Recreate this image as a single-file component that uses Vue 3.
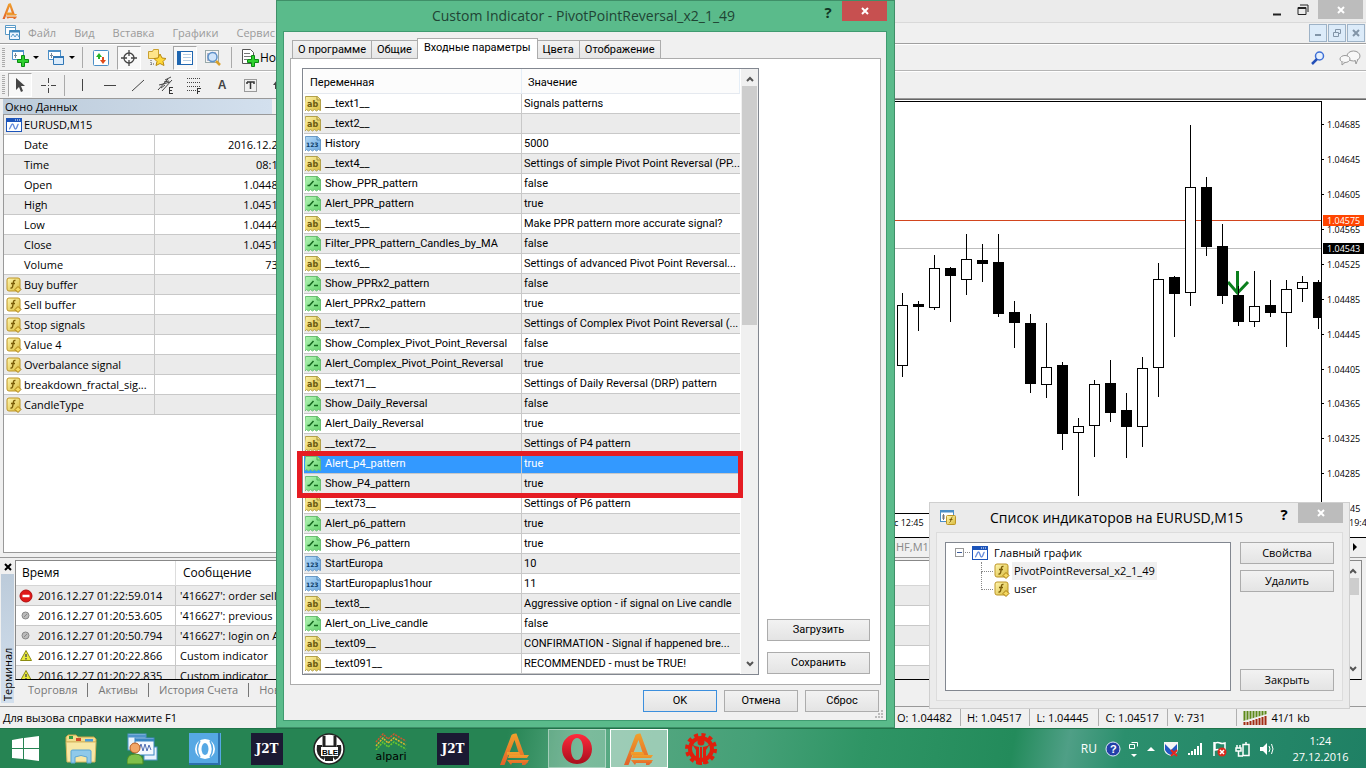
<script setup>
const fmt = (type, name, value) => ({ type, name, value })
const params = [
  fmt('ab', '__text1__', 'Signals patterns'),
  fmt('ab', '__text2__', ''),
  fmt('num', 'History', '5000'),
  fmt('ab', '__text4__', 'Settings of simple Pivot Point Reversal (PP...'),
  fmt('bool', 'Show_PPR_pattern', 'false'),
  fmt('bool', 'Alert_PPR_pattern', 'true'),
  fmt('ab', '__text5__', 'Make PPR pattern more accurate signal?'),
  fmt('bool', 'Filter_PPR_pattern_Candles_by_MA', 'false'),
  fmt('ab', '__text6__', 'Settings of advanced Pivot Point Reversal...'),
  fmt('bool', 'Show_PPRx2_pattern', 'false'),
  fmt('bool', 'Alert_PPRx2_pattern', 'true'),
  fmt('ab', '__text7__', 'Settings of Complex Pivot Point Reversal (...'),
  fmt('bool', 'Show_Complex_Pivot_Point_Reversal', 'false'),
  fmt('bool', 'Alert_Complex_Pivot_Point_Reversal', 'true'),
  fmt('ab', '__text71__', 'Settings of Daily Reversal (DRP) pattern'),
  fmt('bool', 'Show_Daily_Reversal', 'false'),
  fmt('bool', 'Alert_Daily_Reversal', 'true'),
  fmt('ab', '__text72__', 'Settings of P4 pattern'),
  fmt('bool', 'Alert_p4_pattern', 'true'),
  fmt('bool', 'Show_P4_pattern', 'true'),
  fmt('ab', '__text73__', 'Settings of P6 pattern'),
  fmt('bool', 'Alert_p6_pattern', 'true'),
  fmt('bool', 'Show_P6_pattern', 'true'),
  fmt('num', 'StartEuropa', '10'),
  fmt('num', 'StartEuropaplus1hour', '11'),
  fmt('ab', '__text8__', 'Aggressive option - if signal on Live candle'),
  fmt('bool', 'Alert_on_Live_candle', 'false'),
  fmt('ab', '__text09__', 'CONFIRMATION - Signal if happened bre...'),
  fmt('ab', '__text091__', 'RECOMMENDED - must be TRUE!'),
]
const selected = 'Alert_p4_pattern'

const dataRows = [
  ['Date', '2016.12.27'], ['Time', '08:15'], ['Open', '1.04482'], ['High', '1.04517'],
  ['Low', '1.04445'], ['Close', '1.04517'], ['Volume', '731'],
]
const buffers = ['Buy buffer', 'Sell buffer', 'Stop signals', 'Value 4', 'Overbalance signal', 'breakdown_fractal_sig...', 'CandleType']

const log = [
  ['stop', '2016.12.27 01:22:59.014', "'416627': order sell"],
  ['dot', '2016.12.27 01:20:53.605', "'416627': previous"],
  ['dot', '2016.12.27 01:20:50.794', "'416627': login on A"],
  ['warn', '2016.12.27 01:20:22.866', 'Custom indicator'],
  ['warn', '2016.12.27 01:20:22.835', 'Custom indicator'],
]

// x centre, high, body top, body bottom, low, 1 = bearish
const candles = [
  [902, 293, 305, 366, 377, 0], [918, 301, 304, 307, 331, 1], [934, 255, 268, 308, 310, 0],
  [950, 267, 268, 276, 322, 1], [966, 234, 259, 280, 295, 0], [982, 244, 260, 264, 282, 1],
  [998, 234, 262, 314, 317, 1], [1014, 301, 312, 323, 348, 1], [1030, 314, 323, 384, 393, 1],
  [1046, 323, 367, 385, 398, 0], [1062, 362, 365, 434, 450, 1], [1078, 418, 426, 433, 496, 0],
  [1094, 380, 384, 426, 457, 0], [1110, 360, 383, 413, 422, 1], [1126, 393, 410, 427, 458, 1],
  [1142, 357, 368, 427, 447, 0], [1158, 263, 279, 368, 397, 0], [1174, 276, 277, 294, 337, 1],
  [1190, 125, 187, 293, 306, 0], [1206, 177, 187, 247, 256, 1], [1222, 224, 246, 296, 304, 1],
  [1238, 286, 295, 322, 326, 1], [1254, 271, 306, 322, 327, 0], [1270, 280, 305, 313, 317, 1],
  [1286, 280, 289, 313, 347, 0], [1302, 276, 282, 289, 302, 0], [1318, 280, 282, 318, 329, 1],
]
const prices = [
  ['1.04685', 125], ['1.04645', 160], ['1.04605', 195], ['1.04565', 230], ['1.04525', 265], ['1.04485', 300],
  ['1.04445', 335], ['1.04405', 370], ['1.04365', 404], ['1.04325', 439], ['1.04285', 474],
]
const tabs = ['О программе', 'Общие', 'Входные параметры', 'Цвета', 'Отображение']
const status = ['O: 1.04482', 'H: 1.04517', 'L: 1.04445', 'C: 1.04517', 'V: 731']
</script>

<template>
  <div class="desktop">
    <svg class="defs" aria-hidden="true">
      <defs>
        <linearGradient id="gy" x2="1" y2="1"><stop offset="0" stop-color="#fff6b0" /><stop offset="1" stop-color="#d9bb3c" /></linearGradient>
        <linearGradient id="gg" x2="1" y2="1"><stop offset="0" stop-color="#b9f5bb" /><stop offset="1" stop-color="#63d56c" /></linearGradient>
        <linearGradient id="gb" x2="1" y2="1"><stop offset="0" stop-color="#b8dcf8" /><stop offset="1" stop-color="#6ba9e0" /></linearGradient>
        <linearGradient id="go" x2="0" y2="1"><stop offset="0" stop-color="#f0a12c" /><stop offset="1" stop-color="#e2622a" /></linearGradient>
        <linearGradient id="gr" x2="0" y2="1"><stop offset="0" stop-color="#ff2a3c" /><stop offset="1" stop-color="#a80f1c" /></linearGradient>
      </defs>
      <symbol id="i-ab" viewBox="0 0 16 16">
        <path d="M.5.5h12l3 3v11l-2-1-2 1.500-2-1.500-2 1.500-2-1.500-2 1.500-2-1.500-1.500 1.500-1.500-1z" fill="url(#gy)" stroke="#b3a14b" />
        <path d="M12 .5v3.500h3.500" fill="#efe08a" stroke="#a5903a" />
      </symbol>
      <symbol id="i-num" viewBox="0 0 16 16">
        <path d="M.5.5h12l3 3v11l-2-1-2 1.500-2-1.500-2 1.500-2-1.500-2 1.500-2-1.500-1.500 1.500-1.500-1z" fill="url(#gb)" stroke="#6a9ac6" />
        <path d="M12 .5v3.500h3.500" fill="#a3cdf0" stroke="#4d86bb" />
      </symbol>
      <symbol id="i-bool" viewBox="0 0 16 16">
        <path d="M.5.5h12l3 3v11l-2-1-2 1.500-2-1.500-2 1.500-2-1.500-2 1.500-2-1.500-1.500 1.500-1.500-1z" fill="url(#gg)" stroke="#6cc074" />
        <path d="M12 .5v3.500h3.500" fill="#8fe396" stroke="#4db058" />
        <path d="M2.500 9.500h2l4-4.500M9 9.500h4" fill="none" stroke="#14691f" stroke-width="1.500" />
      </symbol>
      <symbol id="i-fx" viewBox="0 0 16 16">
        <rect x="1" y="1" width="13" height="13" rx="2" fill="url(#gy)" stroke="#bd9526" />
        <path d="M9.500 3.500c-2-.5-2 1-2.400 3.500s-.6 4.500-2.600 4M5 6.500h4" fill="none" stroke="#7a5c08" stroke-width="1.400" />
        <path d="M12 9.500l3 3-3 3-3-3z" fill="#f5d860" stroke="#a67c12" />
      </symbol>
      <symbol id="i-chart" viewBox="0 0 16 14">
        <rect x=".5" y=".5" width="15" height="13" fill="#fff" stroke="#1c54ba" />
        <rect width="16" height="4" fill="#1c54ba" />
        <path d="M9 2h1M11 2h1M13 2h1" stroke="#fff" />
        <path d="M3 11c1.500 0 2-5 3.500-5s1.500 5 3 5 1.500-4 3-5" fill="none" stroke="#6a8fdc" stroke-width="1.400" />
      </symbol>
      <symbol id="i-alpari" viewBox="0 0 32 32">
        <path d="M1 32 12.500 2q1-1.500 4-1.500h1L26 24h-5L15.500 7 5.500 32z" fill="url(#go)" />
        <path d="M10 22h20l-2 3H9zM8 27h22l-2 3H13l-1 2z" fill="url(#go)" />
        <path d="M8 19h12l1.500 3H8zM23 29h6l-3 3h-3z" fill="url(#go)" />
      </symbol>
      <symbol id="i-x" viewBox="0 0 8 8"><path d="M1 1l6 6M7 1 1 7" stroke="currentColor" stroke-width="2" /></symbol>
      <symbol id="i-up" viewBox="0 0 8 6"><path d="M1 5l3-3 3 3" fill="none" stroke="#555" stroke-width="2" /></symbol>
      <symbol id="i-down" viewBox="0 0 8 6"><path d="M1 1l3 3 3-3" fill="none" stroke="#555" stroke-width="2" /></symbol>
    </svg>

    <main class="terminal-app">
      <header class="titlebar">
        <svg class="logo"><use href="#i-alpari" /></svg>
        <span class="spring"></span>
        <button class="cap" aria-label="Свернуть"><svg width="10" height="12"><path d="M1 10.500h8" stroke="#222" stroke-width="2" /></svg></button>
        <button class="cap" aria-label="Восстановить"><svg width="12" height="12"><path d="M1 3.500h8v7H1zM1 4.500h8M3 1h8v7" fill="none" stroke="#222" /></svg></button>
        <button class="cap grey" aria-label="Закрыть"><svg width="8" height="8"><use href="#i-x" /></svg></button>
      </header>
      <nav class="menubar">
        <svg width="16" height="16"><path d="M.5.500h10v9H.5zM.5 2.500h10" fill="#fff" stroke="#5b9bc8" /><path d="M4.500 5.500h10v9h-10z" fill="#eef6ff" stroke="#3f87ba" /><path d="M4.500 6.500h10" stroke="#3f87ba" stroke-width="2" /><path d="M6 12l2-3 2 3 2-3 2 3" fill="none" stroke="#5b9bc8" /></svg>
        <a href="#">Файл</a><a href="#">Вид</a><a href="#">Вставка</a><a href="#">Графики</a><a href="#">Сервис</a>
        <span class="spring"></span>
        <span class="mdi">
          <button aria-label="Свернуть график"><svg width="8" height="8"><path d="M1 6h6" stroke="#8295a8" stroke-width="2" /></svg></button>
          <button aria-label="Восстановить график"><svg width="8" height="8"><path d="M.5 3.500h5v4h-5zM2.500 3V.500h5v4H6" fill="none" stroke="#8295a8" /></svg></button>
          <button class="mx" aria-label="Закрыть график"><svg width="8" height="8"><use href="#i-x" /></svg></button>
        </span>
      </nav>

      <div class="toolbar first">
        <i class="grip"></i>
        <button class="tb" aria-label="Новый график"><svg width="18" height="18"><path d="M1.500 1.500h11v9h-11z" fill="#fff" stroke="#4b8fc7" /><path d="M1 2h12" stroke="#4b8fc7" stroke-width="2" /><path d="M4.500 4v5M3 6.500h3" stroke="#789" /><path d="M10.500 6.500h3v4h4v3h-4v4h-3v-4h-4v-3h4z" fill="#2fd12f" stroke="#0a8a12" /></svg></button>
        <svg class="caret" width="8" height="5"><path d="M1 1h6L4 4z" /></svg>
        <button class="tb" aria-label="Профили"><svg width="18" height="18"><path d="M1.500 1.500h12v9h-12z" fill="#fff" stroke="#4b8fc7" /><path d="M1 2h13" stroke="#4b8fc7" stroke-width="2" /><path d="M4.500 4v5M3 6.500h3" stroke="#789" /><path d="M6.500 7.500h10v8h-10z" fill="#dcecfb" stroke="#2f76b5" /><path d="M6 8h11" stroke="#2f76b5" stroke-width="2" /></svg></button>
        <svg class="caret" width="8" height="5"><path d="M1 1h6L4 4z" /></svg>
        <i class="sep"></i>
        <button class="tb" aria-label="Обзор рынка"><svg width="16" height="16"><rect x=".5" y=".5" width="15" height="15" rx="1" fill="#fff" stroke="#4b8fc7" /><path d="M3 7l3-4 3 4H7v2H5V7z" fill="#27b327" /><path d="M7 10l3 4 3-4h-2V7H9v3z" fill="#e04a1a" /></svg></button>
        <button class="tb on" aria-label="Окно данных"><svg width="16" height="16"><circle cx="8" cy="8" r="5" fill="none" stroke="#444" stroke-width="1.300" /><path d="M8 0v6M8 10v6M0 8h6M10 8h6" stroke="#444" stroke-width="1.300" /></svg></button>
        <button class="tb" aria-label="Навигатор"><svg width="18" height="17"><path d="M.5 2.500h4l1-2h5v9H.5z" fill="#ffe58a" stroke="#c9a030" /><path d="M3 11v5M3 15h4" stroke="#555" stroke-dasharray="1 1" /><path d="M12 5l2 4 4 .5-3 3 1 4-4-2-4 2 1-4-3-3 4-.5z" fill="#ffd83a" stroke="#b98a10" /></svg></button>
        <button class="tb on" aria-label="Терминал"><svg width="16" height="14"><rect x=".5" y=".5" width="15" height="13" fill="#fff" stroke="#1f66b0" /><path d="M2.500 1v12" stroke="#1f66b0" stroke-width="3" /><path d="M6 3.500h8M6 6.500h8M6 9.500h8" stroke="#b6cde2" /></svg></button>
        <button class="tb" aria-label="Тестер стратегий"><svg width="18" height="17"><rect x="1.500" y="1.500" width="13" height="12" fill="#f6f6f6" stroke="#9aa" /><path d="M4 4v8M11 3v8" stroke="#779" /><circle cx="8.500" cy="8" r="4.500" fill="#cfe5fa" stroke="#5d92c9" stroke-width="1.500" /><path d="M12 12l4 4" stroke="#d8a02a" stroke-width="2.500" /></svg></button>
        <i class="sep"></i>
        <button class="tb order"><svg width="18" height="18"><path d="M1.500.500h8l3 3v11h-11z" fill="#fff" stroke="#555" /><path d="M3 4.500h6M3 7.500h7M3 10.500h3" stroke="#777" /><path d="M10.500 6.500h3v4h4v3h-4v4h-3v-4h-4v-3h4z" fill="#2fd12f" stroke="#0a8a12" /></svg><span>Но</span></button>
        <span class="spring"></span>
        <button class="tb" aria-label="Поиск"><svg width="14" height="14"><circle cx="8.500" cy="5" r="4" fill="#e6f0fd" stroke="#3d6fd6" stroke-width="1.500" /><path d="M6 8l-5 5" stroke="#2450b8" stroke-width="2.500" /></svg></button>
        <button class="tb chat" aria-label="Сообщество"><svg width="22" height="16"><ellipse cx="14.500" cy="6" rx="6.500" ry="5" fill="#f8f8f8" stroke="#999" /><path d="M16 10l1 4 2-5" fill="#f8f8f8" stroke="#999" /><ellipse cx="6" cy="9" rx="5" ry="3.500" fill="#f8f8f8" stroke="#999" /><path d="M3 12v3l3-2.500" fill="#eee" stroke="#999" /></svg></button>
      </div>

      <div class="toolbar second">
        <i class="grip"></i>
        <button class="tb on" aria-label="Курсор"><svg width="12" height="16"><path d="M2 1v12l3-3 2 5 2-1-2-5h4z" fill="#444" /></svg></button>
        <button class="tb" aria-label="Перекрестие"><svg width="16" height="16"><path d="M8.500 1v5M8.500 11v5M1 8.500h5M11 8.500h5M8.500 8v1" stroke="#444" /></svg></button>
        <i class="sep tight"></i>
        <button class="tb" aria-label="Вертикальная линия"><svg width="16" height="16"><path d="M8.500 2v12" stroke="#444" /></svg></button>
        <button class="tb" aria-label="Горизонтальная линия"><svg width="16" height="16"><path d="M2 8.500h12" stroke="#444" /></svg></button>
        <button class="tb" aria-label="Трендовая линия"><svg width="16" height="16"><path d="M2 14 14 3" stroke="#444" /></svg></button>
        <button class="tb" aria-label="Канал"><svg width="18" height="18"><path d="M1 14 11 3M5 15 15 4M2 9l4-1M4 12l4-3M7 6l5-1M6 8l7-2M8 4l6-3" stroke="#444" /><path d="M12 11.500h4M12 14.500h3M12 17.500h4M12.500 11v7" stroke="#333" /></svg></button>
        <button class="tb" aria-label="Фибоначчи"><svg width="18" height="18"><path d="M2 2.500h14M2 6.500h14M2 10.500h14M2 14.500h9" stroke="#444" stroke-dasharray="1 1" /><path d="M12.500 12v6M12 12.500h4M12 15.500h3" stroke="#333" /></svg></button>
        <button class="tb glyph" aria-label="Текст">A</button>
        <button class="tb" aria-label="Метка"><svg width="16" height="16"><rect x="2.500" y="2.500" width="12" height="12" fill="none" stroke="#444" stroke-dasharray="1 1" /><path d="M5 5h7v2M5 5v2M8.500 5v7" fill="none" stroke="#333" stroke-width="1.500" /></svg></button>
        <button class="tb" aria-label="Стрелки"><svg width="16" height="16"><path d="M3 8l4-5 4 5H9v4H5V8z" fill="#444" /></svg></button>
      </div>

      <section class="workspace">
        <aside class="datawin">
          <h2>Окно Данных</h2>
          <div class="databox">
            <table>
              <colgroup><col class="c1" /><col /></colgroup>
              <tbody>
                <tr><td colspan="2"><svg class="ic"><use href="#i-chart" /></svg>EURUSD,M15</td></tr>
                <tr v-for="r in dataRows" :key="r[0]"><td class="ind">{{ r[0] }}</td><td class="val">{{ r[1] }}</td></tr>
                <tr v-for="b in buffers" :key="b"><td><svg class="ic"><use href="#i-fx" /></svg>{{ b }}</td><td></td></tr>
              </tbody>
            </table>
          </div>
        </aside>
        <div class="chartcol">
          <div class="chart">
            <svg viewBox="890 100 476 436" width="476" height="436">
              <path d="M890 101.500h431.500M1321.500 101v412M890 513.500h431.500" fill="none" stroke="#000" />
              <path d="M890 220.500h431" stroke="#d2451e" />
              <path d="M890 248.500h431" stroke="#bdbdbd" />
              <path d="M1228 282l9.500 11 10.500-11M1237.500 271v22" fill="none" stroke="#0b7f1d" stroke-width="3" />
              <g shape-rendering="crispEdges">
                <template v-for="c in candles" :key="c[0]">
                  <rect :x="c[0]" :y="c[1]" width="1" :height="c[4] - c[1]" fill="#000" />
                  <rect :x="c[0] - 4.5" :y="c[2] + 0.5" :width="c[0] > 1310 ? 8 : 10" :height="c[3] - c[2] - 1" :fill="c[5] ? '#000' : '#fff'" stroke="#000" />
                </template>
              </g>
              <g class="axis">
                <template v-for="p in prices" :key="p[0]">
                  <rect x="1322" :y="p[1] - 1" width="2" height="1" />
                  <text x="1327" :y="p[1] + 3">{{ p[0] }}</text>
                </template>
                <rect x="1323" y="215" width="41" height="11" fill="#ff4500" /><text class="w" x="1327" y="224">1.04575</text>
                <rect x="1323" y="243" width="41" height="11" /><text class="w" x="1327" y="252">1.04543</text>
                <text x="894" y="526">с 12:45</text>
                <text x="1350" y="512">45</text>
                <text x="1349" y="526">19:4</text>
              </g>
            </svg>
          </div>
          <div class="charttabs"><span>HF,M15</span><svg width="5" height="8"><path d="M0 0v8l4-4z" /></svg></div>
        </div>
      </section>

      <section class="journal">
        <div class="jcap"><button aria-label="Закрыть терминал"><svg width="8" height="8"><use href="#i-x" /></svg></button><span>Терминал</span></div>
        <div class="jmain">
          <div class="jbox">
            <table>
              <thead><tr><th class="time">Время</th><th>Сообщение</th></tr></thead>
              <tbody>
                <tr v-for="l in log" :key="l[1]">
                  <td>
                    <svg class="li" viewBox="0 0 14 14">
                      <template v-if="l[0] === 'stop'"><circle cx="7" cy="7" r="6" fill="#e01818" stroke="#b00d0d" /><path d="M3.500 7h7" stroke="#fff" stroke-width="2.500" /></template>
                      <template v-else-if="l[0] === 'dot'"><circle cx="6.500" cy="6.500" r="3.500" fill="#bbb" stroke="#888" /><path d="M5 8l3-3" stroke="#888" /></template>
                      <template v-else><path d="M7 1.500 12.500 11.500h-11z" fill="#eaea3c" stroke="#8b8b12" /><path d="M7 5v3M7 9v1.500" stroke="#555" stroke-width="1.500" /></template>
                    </svg>{{ l[1] }}
                  </td>
                  <td>{{ l[2] }}</td>
                </tr>
              </tbody>
            </table>
            <div class="scroll jscroll"><svg width="8" height="6"><use href="#i-up" /></svg><i class="thumb"></i><span class="spring"></span><svg width="8" height="6"><use href="#i-down" /></svg></div>
          </div>
          <nav class="jtabs"><a href="#">Торговля</a><a href="#">Активы</a><a href="#">История Счета</a><a href="#">Новости</a></nav>
        </div>
      </section>

      <footer class="status">
        <span class="help">Для вызова справки нажмите F1</span>
        <span v-for="s in status" :key="s" class="cell">{{ s }}</span>
        <span class="cell traffic"><svg width="24" height="14"><path d="M1.500 0v14M4.500 0v14M7.500 0v14M10.500 0v14M13.500 0v14M16.500 0v14M19.500 0v14M22.500 0v14" stroke="#5e8a1a" stroke-width="2" /><path d="M0 14v-4L24 3v11z" fill="#f0f0f0" /><path d="M1.500 11v3M4.500 11v3M7.500 10v4M10.500 9v5M13.500 8v6M16.500 7v7M19.500 6v8M22.500 5v9" stroke="#a32c14" stroke-width="2" /></svg>41/1 kb</span>
      </footer>
    </main>

    <section class="window params" aria-label="Custom Indicator">
      <header>
        <h1>Custom Indicator - PivotPointReversal_x2_1_49</h1>
        <button class="q" aria-label="Справка">?</button>
        <button class="close" aria-label="Закрыть"><svg width="8" height="8"><use href="#i-x" /></svg></button>
      </header>
      <div class="body">
        <div class="tabs" role="tablist">
          <button v-for="t in tabs" :key="t" role="tab" :aria-selected="t === 'Входные параметры'" :class="{ active: t === 'Входные параметры' }">{{ t }}</button>
        </div>
        <div class="page">
          <div class="grid">
            <table>
              <thead><tr><th>Переменная</th><th>Значение</th></tr></thead>
              <tbody>
                <tr v-for="p in params" :key="p.name" :class="{ sel: p.name === selected }">
                  <td>
                    <svg class="ic">
                      <use :href="'#i-' + p.type" />
                      <text v-if="p.type === 'ab'" class="t-ab" x="2" y="11">ab</text>
                      <text v-if="p.type === 'num'" class="t-num" x="1" y="11">123</text>
                    </svg>{{ p.name }}
                  </td>
                  <td>{{ p.value }}</td>
                </tr>
              </tbody>
            </table>
            <div class="scroll"><svg width="8" height="6"><use href="#i-up" /></svg><i class="thumb"></i><span class="spring"></span><svg width="8" height="6"><use href="#i-down" /></svg></div>
          </div>
          <div class="side"><button class="btn">Загрузить</button><button class="btn">Сохранить</button></div>
        </div>
        <div class="actions"><button class="btn default">OK</button><button class="btn">Отмена</button><button class="btn">Сброс</button></div>
        <svg class="resize" width="8" height="8"><path d="M6 1h2M3 4h2M6 4h2M0 7h2M3 7h2M6 7h2" stroke="#bbb" stroke-width="2" /></svg>
      </div>
      <div class="mark"></div>
    </section>

    <section class="window list" aria-label="Список индикаторов">
      <header>
        <svg width="17" height="15"><rect x=".5" y=".5" width="13" height="11" fill="#fff" stroke="#4b8fc7" /><path d="M0 1.500h14" stroke="#4b8fc7" stroke-width="2" /><path d="M3.500 4v6M2 6h3M2 8h3" stroke="#777" /><rect x="6.500" y="5.500" width="9" height="9" rx="1" fill="url(#gy)" stroke="#bd9526" /><path d="M12.500 7c-2 0-1 5-3 5.500M9.500 9.500h3" stroke="#7a5c08" fill="none" /></svg>
        <h1>Список индикаторов на EURUSD,M15</h1>
        <button class="q" aria-label="Справка">?</button>
        <button class="close" aria-label="Закрыть"><svg width="8" height="8"><use href="#i-x" /></svg></button>
      </header>
      <div class="body">
        <ul class="tree">
          <li><svg class="exp" width="16" height="10"><rect x=".5" y=".5" width="8" height="8" fill="#fff" stroke="#999" /><path d="M2 4.500h5" stroke="#3b5a9a" /><path d="M10 4.500h6" stroke="#888" stroke-dasharray="1 1" /></svg><svg class="ic"><use href="#i-chart" /></svg><span>Главный график</span></li>
          <li class="sub"><i class="twig"></i><svg class="ic"><use href="#i-fx" /></svg><span class="hl">PivotPointReversal_x2_1_49</span></li>
          <li class="sub"><i class="twig long"></i><svg class="ic"><use href="#i-fx" /></svg><span>user</span></li>
        </ul>
        <div class="col"><button class="btn">Свойства</button><button class="btn">Удалить</button><span class="spring"></span><button class="btn">Закрыть</button></div>
      </div>
    </section>

    <footer class="taskbar">
      <button class="start" aria-label="Пуск"><svg width="27" height="26"><path d="M0 4l11-2v10H0zM12 2l15-2v12H12zM0 13h11v10L0 22zM12 13h15v12l-15-2z" fill="#fff" /></svg></button>
      <button class="task" aria-label="Проводник"><svg width="32" height="30"><path d="M1 5V3l2-2h8l2 2h16l2 2v3H1z" fill="#f3dd8d" stroke="#c7a54a" /><path d="M4 2h4v3H4z" fill="#2f9e45" /><path d="M11 4h5v3h-5z" fill="#d24a2a" /><path d="M20 5h8v3h-8z" fill="#4a9bd9" /><path d="M1 8h30l-1 20H2z" fill="#f8e7a4" stroke="#d6b760" /><path d="M6 17q0-1 2-1h16q2 0 2 1v12h-4v-6q-6-3-12 0v6H6z" fill="#8fc9ea" stroke="#5ba5d4" /></svg></button>
      <button class="task" aria-label="MetaTrader"><svg width="32" height="32"><rect x="1" y="1" width="18" height="16" fill="#e9f3fc" stroke="#4f93cc" /><path d="M1 3h18" stroke="#4f93cc" stroke-width="3" /><rect x="17" y="14" width="13" height="13" fill="#e9f3fc" stroke="#4f93cc" /><rect x="8" y="5" width="19" height="17" fill="#f4f9fe" stroke="#3b86c4" /><path d="M8 7h19" stroke="#3b86c4" stroke-width="3" /><path d="M12 17l2-6 2 7 2-7 2 7 2-6 2 5" fill="none" stroke="#4f6db3" /><circle cx="8" cy="15" r="5" fill="#f2a768" stroke="#b95e22" /><path d="M0 31q-1-10 8-10t8 10z" fill="#7fc04a" stroke="#4b8a22" /></svg></button>
      <button class="task" aria-label="Брокер"><svg width="32" height="32"><rect width="32" height="32" fill="#56a8e4" /><path d="M31 0v32H0v-2h29V0z" fill="#2b6fae" /><circle cx="16" cy="16" r="10" fill="#fff" /><ellipse cx="16" cy="16" rx="3.500" ry="6" fill="#56a8e4" /><path d="M11 8q-5 8 0 16M21 8q5 8 0 16" fill="none" stroke="#56a8e4" stroke-width="1.500" /></svg></button>
      <button class="task"><span class="j2t">J2T</span></button>
      <button class="task" aria-label="BLE"><svg width="32" height="32"><circle cx="16" cy="16" r="15" fill="#fff" stroke="#222" stroke-width="1.500" /><path d="M11 3v11h11V3" fill="none" stroke="#222" stroke-width="3" /><path d="M4 12q-2 11 7 15l1-3-3-12zM28 12q2 11-6 15l-2-3 4-12zM12 23h8v5h-8z" fill="#222" /><rect x="8" y="14" width="17" height="9" fill="#fff" /><text class="t-ble" x="9" y="22">BLE</text></svg></button>
      <button class="task"><span class="alp"><svg width="32" height="17"><g fill="none" stroke-width="1.500" stroke-dasharray="2 1"><path d="M1 9l7-8 5 5 6-5 5 3 7 4" stroke="#d1562c" /><path d="M1 13l7-8 5 5 6-5 5 3 7 4" stroke="#e0b52c" /><path d="M1 17l7-8 5 5 6-5 5 3 7 4" stroke="#6cc82c" /></g></svg>alpari</span></button>
      <button class="task"><span class="j2t">J2T</span></button>
      <button class="task" aria-label="Alpari"><svg width="32" height="32"><use href="#i-alpari" /></svg></button>
      <button class="task open" aria-label="Opera"><svg width="32" height="32"><path d="M16 1C8 1 1 7 1 16s7 15 15 15 15-6 15-15S24 1 16 1zm0 4c4 0 6 5 6 11s-2 11-6 11-6-5-6-11 2-11 6-11z" fill="url(#gr)" /></svg></button>
      <button class="task current" aria-label="Терминал Alpari"><svg width="32" height="32"><use href="#i-alpari" /></svg></button>
      <button class="task" aria-label="Настройки"><svg width="32" height="32"><circle cx="16" cy="16" r="14" fill="none" stroke="#e01f0c" stroke-width="4" stroke-dasharray="4 3.330" /><circle cx="16" cy="16" r="11" fill="none" stroke="#e01f0c" stroke-width="4" /><circle cx="16" cy="9" r="3.500" fill="#e01f0c" /><path d="M7 11q3 3 7 3v17h-3V17zM25 11q-3 3-7 3v17h3V17zM15 14h2v18h-2z" fill="#e01f0c" /></svg></button>
      <span class="spring"></span>
      <div class="tray">
        <span class="lang">RU</span>
        <svg width="16" height="16"><circle cx="8" cy="8" r="7" fill="#2340a8" stroke="#dfe6fa" /><text class="t-help" x="5" y="12">?</text></svg>
        <svg width="10" height="18"><path d="M2.500 2.500h6v4M.5 4.500h5v4h-5z" fill="none" stroke="#fff" /><path d="M2 14h6l-3 3z" fill="#fff" /></svg>
        <svg width="8" height="6"><path d="M0 5l4-4 4 4z" fill="#fff" /></svg>
        <svg width="16" height="16"><path d="M1 1h14v7q0 5-7 7-7-2-7-7z" fill="#f5f5f5" /><path d="M2 3l6 6 6-6v6q-2 4-6 5-4-1-6-5z" fill="#2358c4" /><path d="M8 9l6 6M14 9l-6 6" stroke="#e3281c" stroke-width="2" /></svg>
        <svg width="16" height="16"><path d="M2 14v-2M5 14v-4M8 14V8M11 14V5M14 14V2" stroke="#fff" stroke-width="2" /></svg>
        <svg width="16" height="16"><path d="M3 1v14M4 2q3-1 5 0t5 0v7q-3 1-5 0T4 9z" fill="none" stroke="#fff" stroke-width="1.500" /><circle cx="11" cy="11" r="4.500" fill="#d92a1c" /><path d="M9 9l4 4M13 9l-4 4" stroke="#fff" stroke-width="1.500" /></svg>
        <svg width="16" height="16"><rect x="8" y="3.500" width="6" height="11" fill="none" stroke="#fff" stroke-width="1.500" /><path d="M10 2h2M2 4v3M5 4v3M1 7h5v3H1zM3.500 10v5H8" fill="none" stroke="#fff" stroke-width="1.500" /></svg>
        <svg width="16" height="16"><path d="M1 6h3l4-4v12l-4-4H1z" fill="#fff" /><path d="M10 5q2 3 0 6M12.500 3q3 5 0 10" fill="none" stroke="#fff" /></svg>
      </div>
      <div class="clock"><span>1:24</span><span>27.12.2016</span></div>
    </footer>
  </div>
</template>

<style>
body { margin: 0; }
</style>

<style scoped>
* { box-sizing: border-box; }
.desktop { position: relative; min-height: 100vh; display: flex; flex-direction: column; overflow: hidden; font: 11px/16px "Open Sans", "Noto Sans", sans-serif; color: #000; background: #f0f0f0; }
.defs { position: absolute; width: 0; height: 0; }
svg { display: block; flex: none; }
button { font: inherit; color: inherit; border: 0; padding: 0; margin: 0; background: none; display: flex; align-items: center; justify-content: center; white-space: nowrap; }
a { color: inherit; text-decoration: none; }
h1, h2 { margin: 0; font-weight: normal; }
table { border-collapse: separate; border-spacing: 0; table-layout: fixed; width: 100%; }
td, th { padding: 0; font-weight: normal; text-align: left; white-space: nowrap; overflow: hidden; }
.spring { flex: 1; }
.terminal-app { flex: 1; display: flex; flex-direction: column; min-height: 0; }

.titlebar { height: 23px; display: flex; background: #ebebeb; border-bottom: 1px solid #d9d9d9; }
.logo { width: 16px; height: 16px; margin: 3px 0 0 2px; }
.cap { width: 26px; height: 19px; }
.cap.grey { width: 45px; margin: 0 3px 0 2px; background: #bcbcbc; color: #fff; }
.menubar { height: 21px; display: flex; align-items: center; gap: 18px; padding: 0 0 0 5px; color: #9a9a9a; border-bottom: 1px solid #9f9f9f; }
.menubar > svg { margin-right: -11px; }
.mdi { display: flex; gap: 1px; margin-right: 1px; }
.mdi button { width: 18px; height: 18px; background: #dcebf9; border: 1px solid #9db2c6; color: #8295a8; }

.toolbar { height: 27px; display: flex; align-items: center; gap: 4px; padding-right: 4px; border-top: 1px solid #fff; }
.toolbar.first { border-bottom: 1px solid #b5b5b5; }
.grip { width: 3px; height: 20px; margin: 0 -1px 0 2px; background: repeating-linear-gradient(#aaa 0 1px, #f0f0f0 1px 2px); }
.tb { width: 24px; height: 24px; }
.tb.on { background: #f8f8f8; border: 1px solid #a5a5a5; border-right-color: #fff; border-bottom-color: #fff; }
.tb.order { width: auto; gap: 1px; padding-left: 3px; font-size: 12px; }
.tb.glyph { font: bold 12px "Liberation Sans", sans-serif; color: #444; }
.tb.chat { margin-left: 4px; }
.caret { margin-left: -4px; }
.sep { width: 1px; height: 21px; background: #aaa; margin: 0 2px; }
.sep.tight { margin: 0 1px 0 0; }

.workspace { flex: 1; display: flex; min-height: 0; border-top: 1px solid #999; }
.datawin { width: 288px; flex: none; display: flex; flex-direction: column; padding: 0 0 4px 3px; }
.datawin h2 { font-size: 11px; line-height: 15px; padding-left: 2px; background: linear-gradient(90deg, #bccbda, #d3e0ee); margin-right: 16px; }
.databox { flex: 1; background: #fff; border: 1px solid #999; border-right: 0; }
.databox .c1 { width: 150px; }
.databox td { height: 20px; border-bottom: 1px solid #c8c8c8; }
.databox td:first-child { padding-left: 2px; }
.databox tr td:nth-child(2) { border-left: 1px solid #c8c8c8; }
.databox tr:nth-child(odd) { background: #ebebeb; }
.databox td.ind { padding-left: 20px; }
.databox .val { text-align: right; padding-right: 4px; }
.ic { width: 16px; height: 16px; display: inline-block; vertical-align: top; margin-right: 2px; }
.t-ab { font: bold 8px "DejaVu Sans", sans-serif; fill: #6b5a10; }
.t-num { font: bold 6px "DejaVu Sans", sans-serif; fill: #0c3a66; }
.t-ble { font: bold 8px "Liberation Sans", sans-serif; }
.t-help { font: bold 11px "Liberation Sans", sans-serif; fill: #fff; }

.chartcol { flex: 1; min-width: 0; display: flex; flex-direction: column; }
.chart { flex: 1; min-height: 0; background: #fff; border-top: 1px solid #666; display: flex; justify-content: flex-end; overflow: hidden; }
.axis { font: 9px "Open Sans", sans-serif; }
.axis .w { fill: #fff; }
.charttabs { height: 20px; display: flex; align-items: center; justify-content: space-between; padding: 0 8px 2px 608px; color: #888; border-top: 1px solid #000; }
.charttabs svg { fill: #000; }

.journal { height: 150px; display: flex; border-top: 1px solid #999; padding: 2px 0 3px; border-bottom: 1px solid #999; }
.jcap { width: 13px; margin: 0 1px; display: flex; flex-direction: column; align-items: center; }
.jcap button { height: 14px; }
.jcap span { flex: 1; width: 13px; writing-mode: vertical-rl; transform: rotate(180deg); line-height: 13px; background: linear-gradient(#d3e0ee, #bccbda); padding-top: 2px; }
.jmain { flex: 1; min-width: 0; display: flex; flex-direction: column; }
.jbox { flex: 1; min-height: 0; overflow: hidden; display: flex; background: #fff; border: 1px solid #888; border-bottom-color: #000; margin-right: 4px; }
.jbox table { flex: 1; align-self: flex-start; }
.jbox th { height: 25px; font-size: 12px; padding-left: 7px; border-bottom: 1px solid #d5d5d5; }
.jbox .time { width: 160px; padding-left: 6px; border-right: 1px solid #ddd; }
.jbox td { height: 20px; padding-left: 4px; border-bottom: 1px solid #c8c8c8; }
.jbox td:first-child { padding-left: 3px; border-right: 1px solid #c8c8c8; }
.jbox tbody tr:nth-child(odd) { background: #ebebeb; }
.li { width: 14px; height: 14px; display: inline-block; vertical-align: top; margin: 1px 5px 0 0; }
.jtabs { height: 23px; display: flex; align-items: center; color: #777; padding: 0 0 3px 3px; }
.jtabs a { padding: 0 10px; line-height: 14px; border-right: 1px solid #777; }
.scroll { width: 17px; display: flex; flex-direction: column; align-items: center; padding: 7px 0; background: #f0f0f0; gap: 4px; }
.thumb { width: 15px; height: 239px; background: #cdcdcd; }
.jscroll .thumb { height: 17px; width: 13px; }

.status { height: 21px; display: flex; align-items: center; padding-left: 3px; }
.status .help { width: 888px; flex: none; }
.cell { min-width: 69px; padding: 0 8px 0 6px; border-right: 1px solid #b0b0b0; line-height: 17px; }
.cell.traffic { border: 0; display: flex; align-items: center; gap: 4px; }

.window { position: absolute; display: flex; flex-direction: column; }
.window header { display: flex; position: relative; }
.window h1 { flex: 1; text-align: center; font-size: 14px; line-height: 30px; white-space: nowrap; }
.q { width: 16px; height: 22px; font: bold 15px "Open Sans", sans-serif; }
.close { width: 45px; height: 20px; color: #fff; }
.btn { height: 22px; background: linear-gradient(#f2f2f2, #e4e4e4); border: 1px solid #acacac; }
.params { left: 276px; top: 0; width: 619px; height: 728px; background: #5abb8b; border: 1px solid #3f8f68; padding: 0 7px 0 6px; font: 11px/16px Roboto, "Liberation Sans", sans-serif; }
.params header { height: 30px; color: #1f4434; font-family: "Open Sans", sans-serif; }
.params .q { color: #113524; }
.params h1 { padding-left: 64px; }
.params .close { background: #c75050; margin-left: 6px; }
.params .body { position: relative; height: 690px; background: #f0f0f0; border: 1px solid #3f9b70; padding: 6px 5px 6px 6px; display: flex; flex-direction: column; }
.tabs { display: flex; align-items: flex-end; height: 21px; padding-left: 2px; margin-bottom: -1px; position: relative; }
.tabs button { height: 19px; padding: 0 5px; margin-right: -1px; background: linear-gradient(#f2f2f2, #e6e6e6); border: 1px solid #acacac; }
.tabs .active { height: 21px; background: #fff; border-bottom: 0; padding: 0 6px 2px; }
.page { flex: 1; background: #fff; border: 1px solid #acacac; display: flex; padding: 9px 10px; padding-left: 11px; }
.grid { width: 457px; border: 1px solid #828790; display: flex; }
.grid table { flex: 1; margin-left: 1px; margin-right: 1px; }
.grid th { height: 25px; padding: 3px 0 0 6px; background: #fcfcfc; border-bottom: 1px solid #e5e9ef; border-right: 1px solid #e5eef7; }
.grid td { height: 20px; border-bottom: 1px solid #c8c8c8; padding-left: 2px; }
.grid td:first-child { border-right: 1px solid #c8c8c8; padding-left: 1px; }
.grid tbody tr:nth-child(even) { background: #ebebeb; }
.grid tbody tr.sel { background: #3399ff; color: #fff; }
.grid .ic { margin-right: 4px; }
.side { flex: 1; display: flex; flex-direction: column; justify-content: flex-end; gap: 11px; padding: 0 0 1px 8px; }
.actions { display: flex; justify-content: flex-end; gap: 7px; padding: 5px 2px 2px 0; }
.actions .btn { width: 74px; }
.btn.default { border-color: #3c8fdd; }
.resize { position: absolute; right: 3px; bottom: 2px; }
.mark { position: absolute; left: 20px; top: 450px; width: 446px; height: 47px; border: 5px solid #e51c23; }

.list { left: 929px; top: 502px; width: 421px; height: 207px; background: #ebebeb; border: 1px solid #cfcfcf; padding: 0 6px 7px; }
.list header { height: 29px; }
.list header > svg { margin: 7px 0 0 4px; }
.list .close { background: #bcbcbc; }
.list .q { margin-right: 6px; }
.list .body { flex: 1; display: flex; gap: 9px; background: #f0f0f0; border: 1px solid #dcdcdc; padding: 9px 8px; }
.tree { flex: 1; margin: 0; padding: 1px 0 0 9px; list-style: none; background: #fff; border: 1px solid #828790; }
.tree li { display: flex; align-items: center; height: 18px; }
.tree .ic { margin: 0 2px 0 1px; }
.tree span { padding: 0 2px; line-height: 18px; }
.tree .hl { background: #f0f0f0; }
.tree li:first-child span { padding-left: 4px; }
.sub { padding-left: 26px; }
.twig { width: 12px; height: 10px; align-self: flex-start; border-left: 1px dotted #888; border-bottom: 1px dotted #888; }
.twig.long { height: 18px; margin-top: -8px; }
.col { width: 94px; display: flex; flex-direction: column; gap: 6px; }

.taskbar { height: 40px; display: flex; align-items: center; border-top: 1px solid #1f7449; background: linear-gradient(100deg, #268453 0, #268453 37%, #5aaa84 43%, #45a077 55%, #2f9565 63%, #238b5b 74%, #4f9f86 78%, #2b8f6d 82%, #1f8064 100%); }
.start { width: 50px; height: 39px; }
.task { width: 62px; height: 39px; }
.task.open { width: 58px; margin: 0 2px; background: rgba(255, 255, 255, .2); border: 1px solid rgba(255, 255, 255, .4); }
.task.current { width: 58px; margin: 0 2px; background: rgba(255, 255, 255, .42); border: 1px solid #fff; }
.j2t { width: 32px; height: 32px; background: #1b1a33; color: #fff; font: bold 12px/32px "DejaVu Serif", serif; text-align: center; }
.alp { display: flex; flex-direction: column; font: 11px/14px "DejaVu Sans", sans-serif; align-items: center; }
.tray { display: flex; align-items: center; gap: 8px; color: #fff; }
.lang { font-size: 12px; }
.clock { width: 91px; display: flex; flex-direction: column; align-items: center; color: #fff; }
</style>
